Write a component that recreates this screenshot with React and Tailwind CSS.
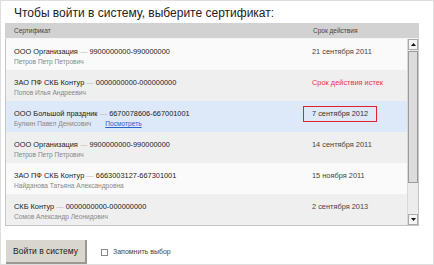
const certs = [
  { org: "ООО Организация", inn: "9900000000-990000000", owner: "Петров Петр Петрович", date: "21 сентября 2011" },
  { org: "ЗАО ПФ СКБ Контур", inn: "0000000000-000000000", owner: "Попов Илья Андреевич", date: "Срок действия истек", expired: true },
  { org: "ООО Большой праздник", inn: "6670078606-667001001", owner: "Булкин Павел Денисович", date: "7 сентября 2012", selected: true },
  { org: "ООО Организация", inn: "9900000000-990000000", owner: "Петров Петр Петрович", date: "14 сентября 2011" },
  { org: "ЗАО ПФ СКБ Контур", inn: "6663003127-667301001", owner: "Найданова Татьяна Александровна", date: "15 ноября 2011" },
  { org: "СКБ Контур", inn: "0000000000-000000000", owner: "Сомов Александр Леонидович", date: "2 сентября 2013" },
];

function Row({ c, i }) {
  const bg = c.selected ? "bg-[#dde8f8]" : i % 2 === 1 ? "bg-[#efefef]" : "bg-[#fafafa]";
  return (
    <div className={`flex h-[31px] items-start ${bg}`}>
      <div className="flex-1 pl-[8px] pt-[7px]">
        <div className="text-[7.4px] leading-[11px] text-[#222]">
          {c.org} <span className="text-[#bbb]">—</span> {c.inn}
        </div>
        <div className="flex text-[6.6px] leading-[10px] text-[#888]">
          <span>{c.owner}</span>
          {c.selected && <span className="ml-[14px] text-[#2a63c9] underline">Посмотреть</span>}
        </div>
      </div>
      <div className="w-[95px] pt-[7px] text-[7.4px] leading-[11px]">
        {c.selected ? (
          <span className="-ml-[9px] -mt-[2px] block w-fit border-[1.5px] border-[#e0222a] px-[8px] py-[2px] leading-[10px] text-[#333]">
            {c.date}
          </span>
        ) : (
          <span className={c.expired ? "text-[#e8333a]" : "text-[#444]"}>{c.date}</span>
        )}
      </div>
    </div>
  );
}

export default function App() {
  return (
    <div className="h-[265px] w-[434px] border border-[#dedede] bg-white font-['Liberation_Sans',Arial,sans-serif]">
      <div className="pl-[13px] pt-[5px] text-[12px] leading-[14px] text-[#222]">
        Чтобы войти в систему, выберите сертификат:
      </div>
      <div className="ml-[4px] mt-[3px] w-[414px]">
        <div className="flex h-[15px] items-center bg-[#d2d2d2] text-[6.5px] text-[#444]">
          <span className="flex-1 pl-[9px]">Сертификат</span>
          <span className="w-[106px]">Срок действия</span>
        </div>
        <div className="flex h-[188px] border border-[#c4c4c4] border-t-[#f4f4f4]">
          <div className="flex-1">
            {certs.map((c, i) => (
              <Row key={i} c={c} i={i} />
            ))}
          </div>
          <div className="flex w-[11px] flex-col border-l border-[#d8d8d8] bg-[#ececec]">
            <div className="flex h-[11px] items-center justify-center border border-[#aaa] bg-[#f4f4f4]">
              <svg width="5" height="3" viewBox="0 0 5 3"><path d="M2.5 0L5 3H0z" fill="#111" /></svg>
            </div>
            <div className="mt-px h-[132px] border border-[#9a9a9a] bg-[#dcdcdc]" />
            <div className="flex-1" />
            <div className="flex h-[11px] items-center justify-center border border-[#aaa] bg-[#f4f4f4]">
              <svg width="5" height="3" viewBox="0 0 5 3"><path d="M0 0H5L2.5 3z" fill="#111" /></svg>
            </div>
          </div>
        </div>
      </div>
      <div className="ml-[5px] mt-[14px] flex items-center">
        <button className="h-[24px] w-[81px] border-r-2 border-b-2 border-[#9c978f] bg-[#d9d5cf] text-[8.5px] text-[#222]">
          Войти в систему
        </button>
        <span className="ml-[14px] h-[7px] w-[7px] border border-[#888] bg-white" />
        <span className="ml-[5px] text-[7px] text-[#444]">Запомнить выбор</span>
      </div>
    </div>
  );
}
